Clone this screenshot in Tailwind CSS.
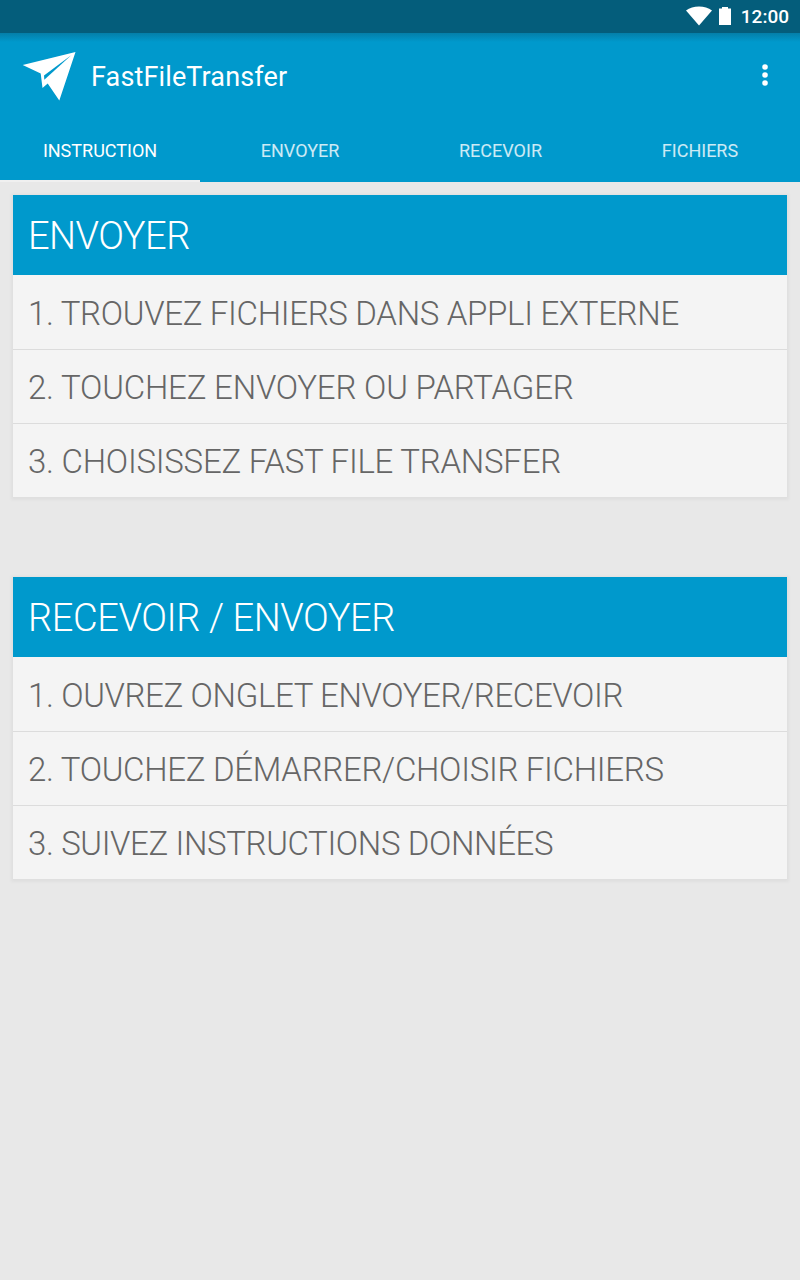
<!DOCTYPE html>
<html lang="fr">
  <head>
    <meta charset="UTF-8" />
    <meta name="viewport" content="width=device-width, initial-scale=1.0" />
    <title>FastFileTransfer</title>
    <script src="https://cdn.jsdelivr.net/npm/@tailwindcss/browser@4"></script>
  </head>
  <body class="min-h-screen bg-[#e8e8e8] font-['Roboto',sans-serif]">
    <div class="flex h-[33px] items-center justify-end bg-[#045d7b] pr-[11px] text-white">
      <svg class="mb-[2px] h-5 w-[26px]" viewBox="0 0 26 20" fill="currentColor"><path d="M13 19.500L0 4.500Q5.500 .500 13 .500T26 4.500Z" /></svg>
      <svg class="mb-[2px] ml-[7px] h-[18px] w-3" viewBox="0 0 12 18" fill="currentColor"><path d="M3 0h6v1.500h3V18H0V1.500h3z" /></svg>
      <span class="ml-[10px] pt-px text-[19px] font-medium">12:00</span>
    </div>

    <header class="bg-[#0099cc] bg-linear-to-b from-[#047fa9] to-[#0099cc] to-[9px] text-white">
      <div class="flex h-[87px] items-center pr-[31px] pl-[22px]">
        <svg class="h-[50px] w-[54px]" viewBox="0 0 54 50" fill="currentColor"><path d="M53.500 0L.7 13L18.700 21.500L20.500 36L25.700 31.500L37.300 48.500Z" /><path d="M49.500 3L22 23.500L22.300 27.800Z" fill="#0099cc" /></svg>
        <h1 class="ml-[15px] pt-0.5 text-[27px] tracking-[0.13px]">FastFileTransfer</h1>
        <svg class="mb-[3px] ml-auto h-[22px] w-2" viewBox="0 0 8 22" fill="currentColor"><circle cx="4" cy="3" r="2.800" /><circle cx="4" cy="11" r="2.800" /><circle cx="4" cy="19" r="2.800" /></svg>
      </div>
      <nav class="grid h-[62px] grid-cols-4 text-center text-[18px] leading-[62px]">
        <a class="h-[62px] border-b-2 border-[#f0f0f0]">INSTRUCTION</a>
        <a class="text-white/80">ENVOYER</a>
        <a class="pl-px text-white/80">RECEVOIR</a>
        <a class="text-white/80">FICHIERS</a>
      </nav>
    </header>

    <main class="flex flex-col gap-20 px-[13px] pt-[13px] font-light">
      <section class="bg-[#f4f4f4] shadow-[0_1px_3px_2px_rgba(0,0,0,0.04)]">
        <h2 class="h-20 bg-[#0099cc] pl-[15px] text-[38px] leading-[83px] tracking-[-0.5px] text-white">ENVOYER</h2>
        <ol class="text-[33px] leading-[77px] text-[#666]">
          <li class="h-[74px] pl-[15px] tracking-[-0.31px]">1. TROUVEZ FICHIERS DANS APPLI EXTERNE</li>
          <li class="h-[74px] border-t border-[#dcdcdc] pl-[15px] leading-[75px] tracking-[-0.2px]">2. TOUCHEZ ENVOYER OU PARTAGER</li>
          <li class="h-[74px] border-t border-[#dcdcdc] pl-[15px] leading-[75px] tracking-[-0.25px]">3. CHOISISSEZ FAST FILE TRANSFER</li>
        </ol>
      </section>

      <section class="bg-[#f4f4f4] shadow-[0_1px_3px_2px_rgba(0,0,0,0.04)]">
        <h2 class="h-20 bg-[#0099cc] pl-[15px] text-[38px] leading-[83px] tracking-[-0.4px] text-white">RECEVOIR / ENVOYER</h2>
        <ol class="text-[33px] leading-[77px] text-[#666]">
          <li class="h-[74px] pl-[15px] tracking-[-0.36px]">1. OUVREZ ONGLET ENVOYER/RECEVOIR</li>
          <li class="h-[74px] border-t border-[#dcdcdc] pl-[15px] leading-[75px] tracking-[-0.3px]">2. TOUCHEZ DÉMARRER/CHOISIR FICHIERS</li>
          <li class="h-[74px] border-t border-[#dcdcdc] pl-[15px] leading-[75px] tracking-[-0.37px]">3. SUIVEZ INSTRUCTIONS DONNÉES</li>
        </ol>
      </section>
    </main>
  </body>
</html>
